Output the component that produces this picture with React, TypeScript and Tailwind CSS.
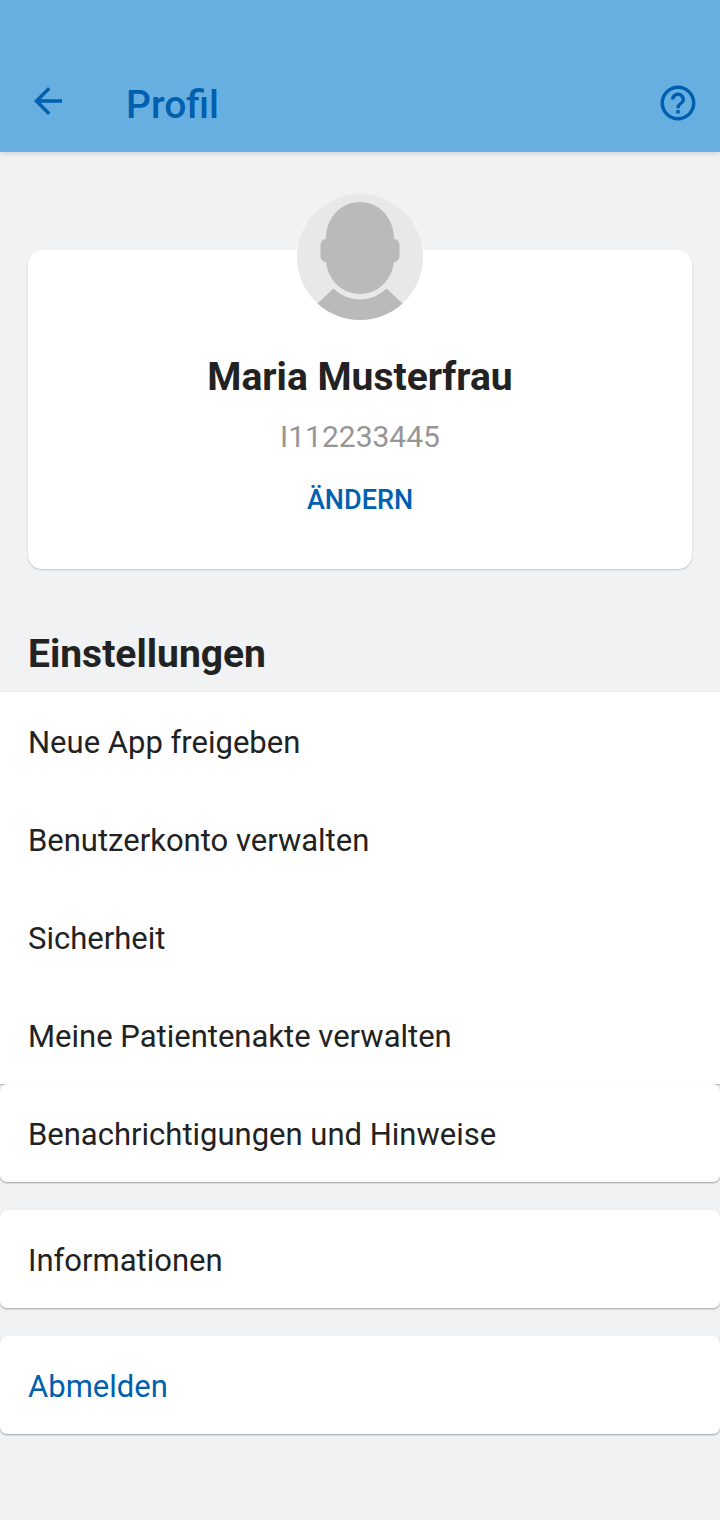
import {MdArrowBack, MdHelpOutline} from 'react-icons/md'

const accountItems = [
    'Neue App freigeben',
    'Benutzerkonto verwalten',
    'Sicherheit',
    'Meine Patientenakte verwalten',
]

export default function App() {
    return (
        <div className="min-h-screen bg-[#f0f2f4] text-[#222222] font-['Roboto',sans-serif]">
            <header className="relative bg-[#67afe1] text-[#0060b0] pt-[54px] shadow-[0_2px_5px_rgba(0,0,0,0.12)]">
                <div className="flex items-center h-[98px] pl-[27px] pr-[21px]">
                    <button aria-label="Zurück" className="pb-1">
                        <MdArrowBack size={42}/>
                    </button>
                    <h1 className="flex-1 ml-[57px] pt-1 text-[39px] leading-[46px] font-medium">Profil</h1>
                    <button aria-label="Hilfe">
                        <MdHelpOutline size={42}/>
                    </button>
                </div>
            </header>

            <main className="pt-[98px] pb-[84px]">
                <section
                    className="mx-7 pb-[51px] flex flex-col items-center bg-white rounded-[14px] shadow-[0_1px_2px_rgba(0,0,0,0.2)]">
                    <Avatar/>
                    <h2 className="mt-[34px] text-[39px] leading-[46px] font-bold">Maria Musterfrau</h2>
                    <p className="mt-[18px] text-[30px] leading-[38px] text-[#969696]">I112233445</p>
                    <button className="mt-[26px] text-[27px] leading-9 font-medium text-[#0060b0]">ÄNDERN</button>
                </section>

                <h2 className="mt-[62px] mb-[15px] px-7 text-[39px] leading-[46px] font-bold">Einstellungen</h2>

                <div className="bg-white shadow-[0_1px_2px_rgba(0,0,0,0.35)]">
                    {accountItems.map(item => <Row key={item} label={item}/>)}
                </div>
                <div className="space-y-7">
                    <Card>
                        <Row label="Benachrichtigungen und Hinweise"/>
                    </Card>
                    <Card>
                        <Row label="Informationen"/>
                    </Card>
                    <Card>
                        <Row label="Abmelden" accent/>
                    </Card>
                </div>
            </main>
        </div>
    )
}

function Card({children}: { children: React.ReactNode }) {
    return (
        <div className="bg-white rounded-[7px] shadow-[0_1px_2px_rgba(0,0,0,0.35)]">
            {children}
        </div>
    )
}

function Row({label, accent}: { label: string; accent?: boolean }) {
    return (
        <button
            className={`flex items-center w-full h-[98px] px-7 pt-1 text-left text-[31px] leading-[38px] ${accent ? 'text-[#0060b0]' : ''}`}
        >
            {label}
        </button>
    )
}

function Avatar() {
    return (
        <svg className="-mt-14 size-[126px]" viewBox="0 0 126 126" role="img" aria-label="Profilbild">
            <circle cx="63" cy="63" r="63" fill="#e8e8e8"/>
            <path
                d="M63 8C82 8 97 24 97 44V45C100 45 102.500 48 102.500 51V62C102.500 65 100 68 97 68C95 86 81 100 63 100S31 86 29 68C26 68 23.500 65 23.500 62V51C23.500 48 26 45 29 45V44C29 24 44 8 63 8Z"
                fill="#bababa"
            />
            <path
                d="M36.500 94.500C44 101.500 53 105.500 63 105.500S82 101.500 89.500 94.500L105.500 109.500A63 63 0 0 1 20.500 109.500Z"
                fill="#bababa"
            />
        </svg>
    )
}
